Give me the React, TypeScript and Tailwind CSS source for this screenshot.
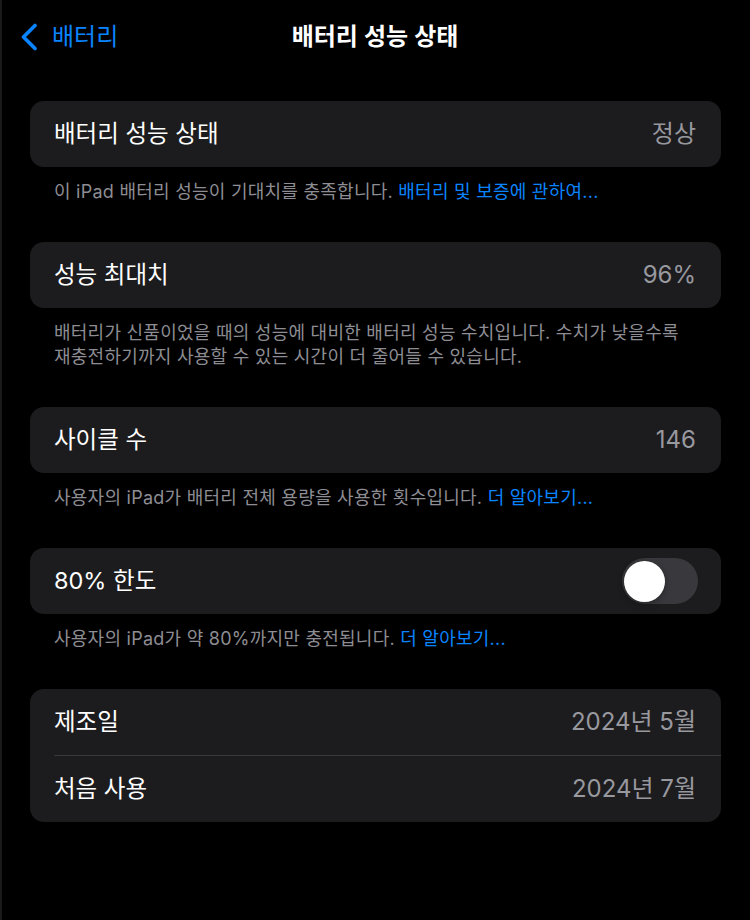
import React from "react";

const font = { fontFamily: 'Inter, "Noto Sans CJK KR", sans-serif' };

function Row({ label, value, children }: { label: string; value?: string; children?: React.ReactNode }) {
  return (
    <div className="h-[66px] pl-[24px] pr-[25px] flex items-center justify-between">
      <span className="text-[23.5px] leading-[28px] text-white">{label}</span>
      {value && <span className="text-[24px] leading-[28px] text-[#98989f]">{value}</span>}
      {children}
    </div>
  );
}

function Footer({ children }: { children: React.ReactNode }) {
  return (
    <p className="px-[24px] pt-[13px] pb-[38px] text-[18px] leading-[24px] tracking-[0.25px] text-[#8d8d93]">
      {children}
    </p>
  );
}

function Link({ children }: { children: React.ReactNode }) {
  return <span className="text-[#0a84ff]">{children}</span>;
}

function Toggle() {
  return (
    <div className="w-[76px] h-[46px] -mr-[2px] rounded-full bg-[#39393d] flex items-center pl-[2px]">
      <div className="w-[41px] h-[41px] rounded-full bg-white shadow-[0_2px_6px_rgba(0,0,0,0.35)]" />
    </div>
  );
}

export default function App() {
  return (
    <div className="w-[750px] h-[920px] bg-black border-l-2 border-[#1a1a1a] overflow-hidden" style={font}>
      {/* 헤더 */}
      <div className="h-[74px] grid grid-cols-[1fr_auto_1fr] items-center">
        <div className="flex items-center gap-[13px] pl-[17px]">
          <svg width="20" height="28" viewBox="0 0 20 28" fill="none">
            <path d="M16 2.5 L4.5 14 L16 25.5" stroke="#0a84ff" strokeWidth="3.6" strokeLinecap="round" strokeLinejoin="round" />
          </svg>
          <span className="text-[24px] leading-[28px] text-[#0a84ff]">배터리</span>
        </div>
        <h1 className="text-[24px] leading-[28px] font-semibold text-white -ml-[2px]">배터리 성능 상태</h1>
        <div />
      </div>

      <div className="pl-[28px] pr-[29px] pt-[27px]">
        <div className="rounded-[14px] bg-[#1c1c1e]">
          <Row label="배터리 성능 상태" value="정상" />
        </div>
        <Footer>
          이 iPad 배터리 성능이 기대치를 충족합니다. <Link>배터리 및 보증에 관하여...</Link>
        </Footer>

        <div className="rounded-[14px] bg-[#1c1c1e]">
          <Row label="성능 최대치" value="96%" />
        </div>
        <Footer>
          배터리가 신품이었을 때의 성능에 대비한 배터리 성능 수치입니다. 수치가 낮을수록
          <br />
          재충전하기까지 사용할 수 있는 시간이 더 줄어들 수 있습니다.
        </Footer>

        <div className="rounded-[14px] bg-[#1c1c1e]">
          <Row label="사이클 수" value="146" />
        </div>
        <Footer>
          사용자의 iPad가 배터리 전체 용량을 사용한 횟수입니다. <Link>더 알아보기...</Link>
        </Footer>

        <div className="rounded-[14px] bg-[#1c1c1e]">
          <Row label="80% 한도">
            <Toggle />
          </Row>
        </div>
        <Footer>
          사용자의 iPad가 약 80%까지만 충전됩니다. <Link>더 알아보기...</Link>
        </Footer>

        <div className="rounded-[14px] bg-[#1c1c1e]">
          <Row label="제조일" value="2024년 5월" />
          <div className="ml-[24px] h-px bg-[#38383a]" />
          <Row label="처음 사용" value="2024년 7월" />
        </div>
      </div>
    </div>
  );
}
